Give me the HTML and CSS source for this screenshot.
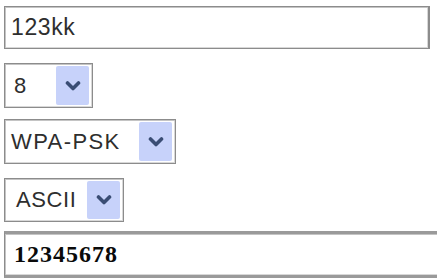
FILE: index.html
```html
<!DOCTYPE html>
<html>
<head>
<meta charset="utf-8">
<link rel="stylesheet" href="styles.css">
</head>
<body>
<div class="form">
  <div class="field field-name"><span class="val">123kk</span></div>
  <div class="sel sel-8"><span class="val">8</span><span class="btn"><svg viewBox="0 0 16 10" width="16" height="10"><path d="M2.5 2 L8 7.5 L13.5 2" fill="none" stroke="#3a4d74" stroke-width="3.6" stroke-linecap="round" stroke-linejoin="round"/></svg></span></div>
  <div class="sel sel-wpa"><span class="val">WPA-PSK</span><span class="btn"><svg viewBox="0 0 16 10" width="16" height="10"><path d="M2.5 2 L8 7.5 L13.5 2" fill="none" stroke="#3a4d74" stroke-width="3.6" stroke-linecap="round" stroke-linejoin="round"/></svg></span></div>
  <div class="sel sel-ascii"><span class="val">ASCII</span><span class="btn"><svg viewBox="0 0 16 10" width="16" height="10"><path d="M2.5 2 L8 7.5 L13.5 2" fill="none" stroke="#3a4d74" stroke-width="3.6" stroke-linecap="round" stroke-linejoin="round"/></svg></span></div>
  <div class="field field-key"><span class="val key">12345678</span></div>
</div>
</body>
</html>
```
FILE: styles.css
```css
html, body {
  margin: 0;
  padding: 0;
  background: #ffffff;
}
.form {
  display: flex;
  flex-direction: column;
  align-items: flex-start;
  padding: 6px 0 0 4px;
  font-family: "Liberation Sans", Arial, sans-serif;
  font-size: 22px;
  color: #2e2e2e;
}
.field, .sel {
  box-sizing: border-box;
  border: 1px solid #8c8c8c;
  box-shadow: inset 1px 1px 0 #c4c4c4, inset -1px -1px 0 #d8d8d8;
  background: #fff;
  display: flex;
  align-items: center;
}
.val {
  letter-spacing: 0.6px;
}
.field-name {
  width: 426px;
  height: 43px;
  padding-left: 6px;
  font-size: 23px;
  border-right: 2px solid #8c8c8c;
}
.sel {
  padding: 2px 3px 2px 0;
  justify-content: space-between;
}
.sel .val {
  padding-left: 9px;
}
.btn {
  align-self: stretch;
  display: flex;
  align-items: center;
  justify-content: center;
  background: #c7d2fa;
  border-radius: 2px;
  width: 33px;
}
.sel-8 {
  margin-top: 14px;
  width: 89px;
  height: 45px;
}
.sel-wpa {
  margin-top: 11px;
  width: 172px;
  height: 45px;
}
.sel-wpa .val {
  padding-left: 6px;
  letter-spacing: 1.4px;
}
.sel-ascii {
  margin-top: 14px;
  width: 120px;
  height: 44px;
}
.sel-ascii .val {
  padding-left: 11px;
}
.field-key {
  margin-top: 9px;
  width: 450px;
  height: 47px;
  padding-left: 9px;
  border-top: 3px solid #9a9a9a;
  border-bottom: 3px solid #9a9a9a;
}
.key {
  font-family: "Liberation Serif", "Times New Roman", serif;
  font-weight: bold;
  font-size: 24px;
  color: #0a0a0a;
  letter-spacing: 1px;
}
```
